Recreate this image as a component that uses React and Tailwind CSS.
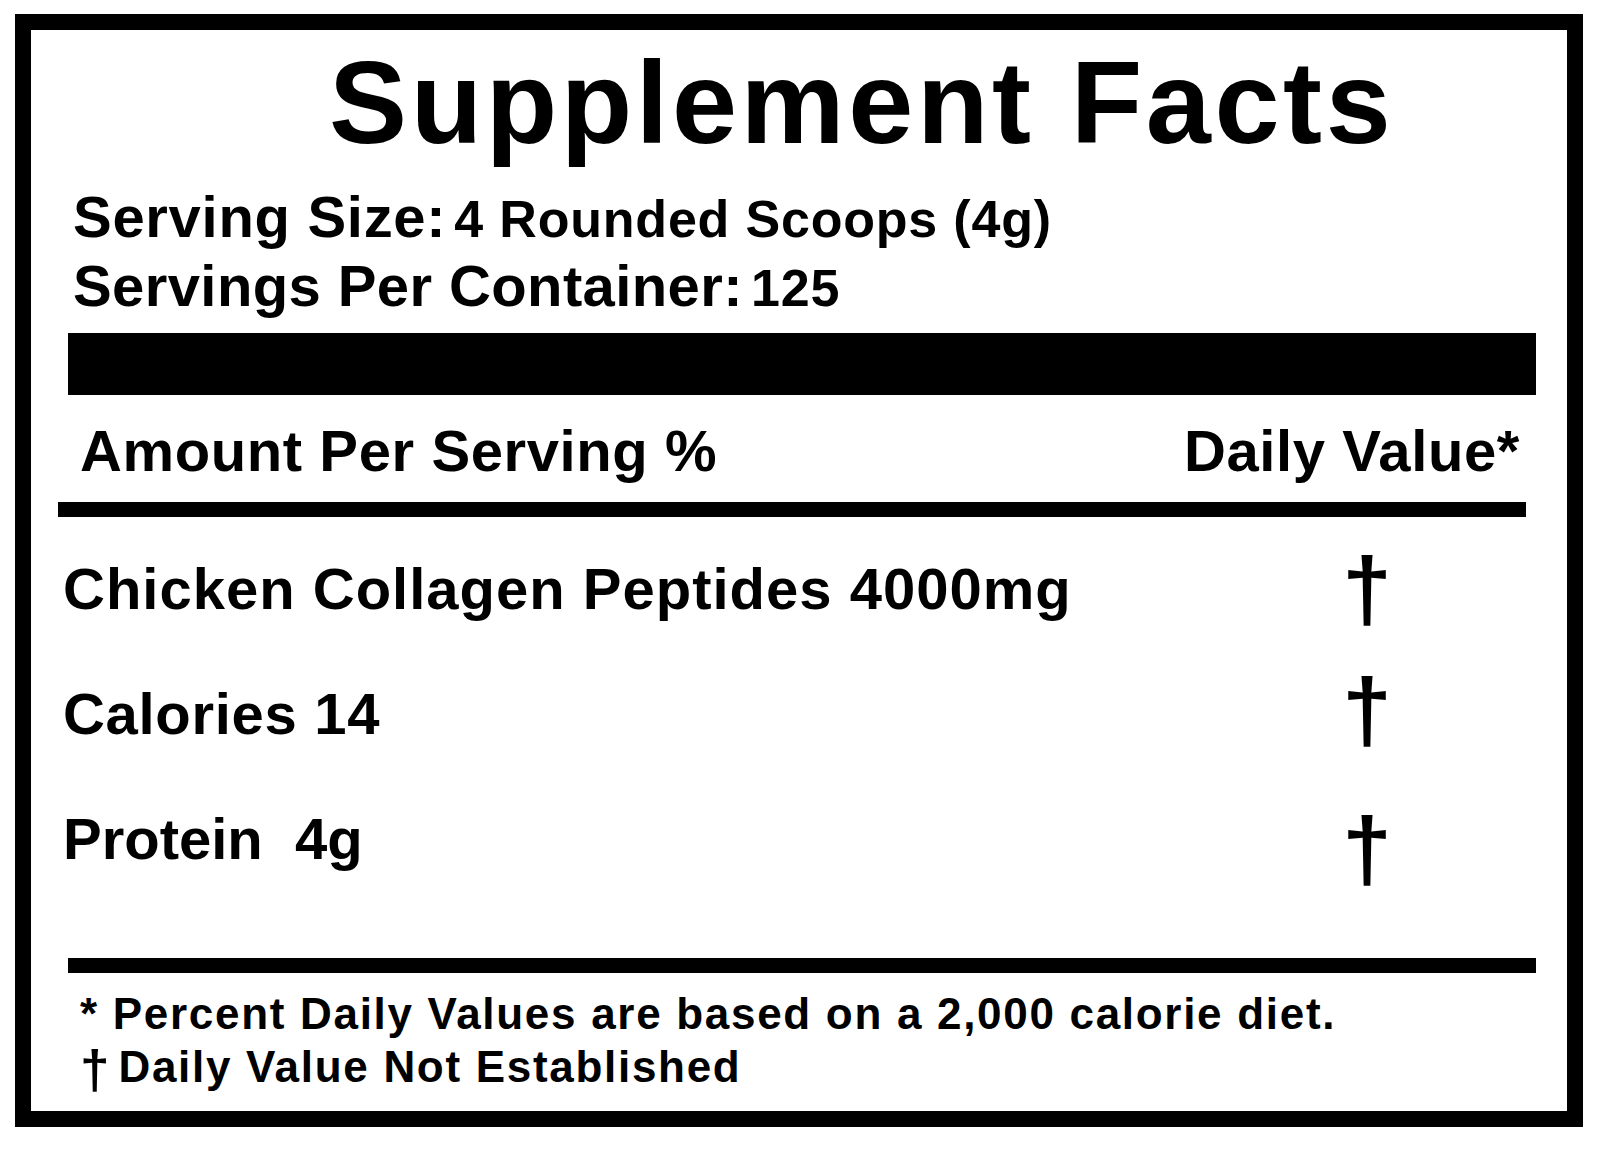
import React from "react";

const nutrients = [
  { label: "Chicken Collagen Peptides 4000mg", track: "tracking-[1px]", shift: "translate-y-[11px]" },
  { label: "Calories 14", track: "tracking-[0.7px]", shift: "translate-y-[7px]" },
  { label: "Protein\u00a0 4g", track: "tracking-[0px]", shift: "translate-y-[21px]" },
];

export default function App() {
  return (
    <div className="min-h-[1152px] bg-white pl-[15px] pt-[14px] font-['Liberation_Sans',Arial,sans-serif] font-bold text-black">
      <div className="flex h-[1113px] w-[1568px] flex-col border-[16px] border-black">
        {/* Title */}
        <h1 className="mt-[14px] pl-[298px] text-[117px] leading-[117px] tracking-[3.6px]">
          Supplement Facts
        </h1>

        {/* Serving info */}
        <div className="mt-[21px] pl-[42px] text-[58px] leading-[69px]">
          <div className="h-[69px] tracking-[0.7px]">
            Serving Size:<span className="pl-[8px] text-[52px] leading-none tracking-[0.8px]">4 Rounded Scoops (4g)</span>
          </div>
          <div className="h-[69px] tracking-[0.4px]">
            Servings Per Container:<span className="pl-[8px] text-[52px] leading-none tracking-[0.8px]">125</span>
          </div>
        </div>

        <div className="mt-[13px] ml-[37px] mr-[31px] h-[62px] bg-black" />

        {/* Column headers */}
        <div className="mt-[21px] flex justify-between pl-[49px] pr-[47px] text-[58px] leading-[70px] tracking-[0.6px]">
          <span>Amount Per Serving %</span>
          <span>Daily Value*</span>
        </div>

        <div className="mt-[16px] ml-[27px] mr-[41px] h-[15px] bg-black" />

        {/* Nutrients */}
        <div className="mt-[9px] pl-[32px]">
          {nutrients.map((n) => (
            <div key={n.label} className="flex h-[125px] items-baseline text-[58px] leading-[125px]">
              <span className={`flex-1 ${n.track}`}>{n.label}</span>
              <span className={`mr-[150px] w-[100px] text-center text-[89px] leading-none ${n.shift}`}>†</span>
            </div>
          ))}
        </div>

        <div className="mt-[57px] ml-[37px] mr-[31px] h-[15px] bg-black" />

        {/* Footnotes */}
        <div className="mt-[14px] pl-[49px] text-[44px] leading-[53px] tracking-[1.7px]">
          <p className="h-[53px]">* Percent Daily Values are based on a 2,000 calorie diet.</p>
          <p className="h-[53px]">
            <span className="inline-block translate-y-[6px] text-[53px] leading-[36px] tracking-[-5px]">†</span> Daily Value Not Established
          </p>
        </div>
      </div>
    </div>
  );
}
